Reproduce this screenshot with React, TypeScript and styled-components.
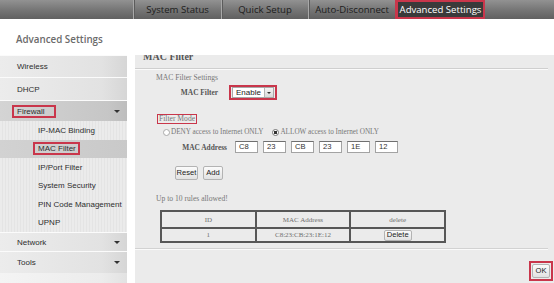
import React from "react";
import styled, { createGlobalStyle } from "styled-components";

const RED = "#c9364b";

const GlobalStyle = createGlobalStyle`
  html, body {
    margin: 0;
    padding: 0;
    background: #ffffff;
  }
  body {
    width: 554px;
    height: 283px;
    overflow: hidden;
  }
`;

const Page = styled.div`
  width: 554px;
  height: 283px;
  display: flex;
  flex-direction: column;
  overflow: hidden;
`;

/* ---------- top navigation ---------- */

const TopBar = styled.nav`
  flex: none;
  height: 19px;
  display: flex;
  padding-left: 133px;
  background: linear-gradient(#929292, #747474 55%, #606060);
`;

const Tab = styled.div<{ $active?: boolean; $w: number }>`
  width: ${(p) => p.$w}px;
  box-sizing: border-box;
  display: flex;
  align-items: center;
  justify-content: center;
  font-family: "Open Sans", "Liberation Sans", sans-serif;
  font-size: 9.6px;
  white-space: nowrap;
  color: ${(p) => (p.$active ? "#ffffff" : "#1c1c1c")};
  border-left: 1px solid ${(p) => (p.$active ? RED : "#a8a8a8")};
  background: ${(p) => (p.$active ? "#3a3a3a" : "transparent")};
  box-shadow: ${(p) => (p.$active ? `inset 0 0 0 2px ${RED}` : "inset 1px 0 0 #5c5c5c")};
`;

const PageTitle = styled.h1`
  margin: 0;
  flex: none;
  height: 36px;
  box-sizing: border-box;
  padding: 14px 0 0 16px;
  font-family: "Open Sans", "Liberation Sans", sans-serif;
  font-size: 9.8px;
  font-weight: 600;
  line-height: 14px;
  color: #6b6b6b;
`;

const Main = styled.div`
  flex: 1;
  display: flex;
  gap: 8px;
  min-height: 0;
`;

/* ---------- side menu ---------- */

const Sidebar = styled.aside`
  width: 127px;
  flex: none;
  display: flex;
  flex-direction: column;
  background: linear-gradient(90deg, #f4f4f4, #ececec 80%, #e2e2e2);
`;

type Kind = "main" | "open" | "sub" | "current";

const MenuRow = styled.div<{ $kind: Kind; $h: number }>`
  height: ${(p) => p.$h}px;
  flex: none;
  box-sizing: border-box;
  display: flex;
  align-items: center;
  padding-left: ${(p) => (p.$kind === "sub" || p.$kind === "current" ? 38 : 17)}px;
  padding-right: 7px;
  font-family: "Liberation Sans", Arial, sans-serif;
  font-size: 8px;
  color: #2e2e2e;
  white-space: nowrap;
  border-top: ${(p) => (p.$kind === "main" || p.$kind === "open" ? "1px solid #fbfbfb" : "none")};
  background: ${(p) =>
    p.$kind === "open"
      ? "linear-gradient(90deg, #d4d4d4, #c6c6c6 85%, #bdbdbd)"
      : p.$kind === "current"
      ? "linear-gradient(90deg, #d2d2d2, #c9c9c9)"
      : p.$kind === "sub"
      ? "repeating-linear-gradient(90deg, #ebebeb 0 2px, #e4e4e4 2px 3px)"
      : "linear-gradient(90deg, #ececec, #e2e2e2 80%, #d6d6d6)"};
`;

const Marked = styled.span<{ $padR: number }>`
  border: 2px solid ${RED};
  padding: 0 ${(p) => p.$padR}px 0 3px;
  margin-left: -5px;
  line-height: 9px;
`;

const Caret = styled.span`
  margin-left: auto;
  width: 0;
  height: 0;
  border-left: 3px solid transparent;
  border-right: 3px solid transparent;
  border-top: 3px solid #333;
`;

const SideFill = styled.div`
  flex: 1;
`;

/* ---------- content panel ---------- */

const Panel = styled.section`
  flex: 1;
  display: flex;
  flex-direction: column;
  background: #ebebeb;
  overflow: hidden;
  font-family: "Liberation Serif", "Times New Roman", serif;
  color: #6a6a6a;
`;

const PanelTitle = styled.h2`
  margin: 0 6px 0 0;
  height: 13px;
  flex: none;
  overflow: hidden;
  padding-left: 8px;
  border-bottom: 1px solid #cfcfcf;
  box-shadow: 0 1px 0 #fbfbfb;
`;

const PanelTitleText = styled.span`
  display: block;
  margin-top: -3px;
  font-size: 10px;
  line-height: 10px;
  font-weight: bold;
  color: #555;
`;

const PanelBody = styled.div`
  padding-left: 21px;
  display: flex;
  flex-direction: column;
  align-items: flex-start;
`;

const Note = styled.div<{ $top: number }>`
  margin-top: ${(p) => p.$top}px;
  font-size: 7.6px;
  line-height: 10px;
  color: #777;
`;

const FieldRow = styled.div<{ $top: number; $labelW: number }>`
  margin-top: ${(p) => p.$top}px;
  display: flex;
  align-items: center;
  & > label {
    width: ${(p) => p.$labelW}px;
    text-align: right;
    font-size: 7.4px;
    font-weight: bold;
    color: #555;
    white-space: nowrap;
  }
`;

const RedFrame = styled.span<{ $pad?: number }>`
  display: inline-flex;
  border: 2px solid ${RED};
  padding: ${(p) => p.$pad ?? 0}px;
`;

const Select = styled.span`
  display: inline-flex;
  align-items: center;
  height: 9px;
  background: #fff;
  border: 1px solid #a9a9a9;
  font-family: "Liberation Sans", Arial, sans-serif;
  font-size: 8px;
  color: #222;
  padding-left: 3px;
  margin: 0 1px;
  gap: 3px;
`;

const SelectButton = styled.span`
  width: 8px;
  height: 100%;
  display: flex;
  align-items: center;
  justify-content: center;
  border-left: 1px solid #b5b5b5;
  background: linear-gradient(#f4f4f4, #d9d9d9);
  &::after {
    content: "";
    border-left: 2px solid transparent;
    border-right: 2px solid transparent;
    border-top: 2px solid #333;
  }
`;

const ModeFrame = styled.div`
  margin-top: 14px;
  margin-left: 1px;
  border: 1px solid ${RED};
  padding: 0 1px;
  font-size: 7.6px;
  line-height: 8px;
  color: #777;
`;

const RadioRow = styled.div`
  margin-top: 3px;
  margin-left: 7px;
  display: flex;
  align-items: center;
  font-size: 7.2px;
  line-height: 10px;
  color: #777;
  white-space: nowrap;
`;

const Radio = styled.span<{ $checked?: boolean }>`
  width: 5px;
  height: 5px;
  border-radius: 50%;
  border: 1px solid ${(p) => (p.$checked ? "#777" : "#aaa")};
  background: ${(p) => (p.$checked ? "radial-gradient(circle, #333 0 1.6px, #fff 2px)" : "#fff")};
  margin-right: 1px;
  margin-left: ${(p) => (p.$checked ? 9 : 0)}px;
`;

const Octets = styled.div`
  display: flex;
  gap: 5px;
  margin-left: 8px;
`;

const Octet = styled.span`
  width: 23px;
  height: 12px;
  box-sizing: border-box;
  background: #fff;
  border: 1px solid #a3a3a3;
  border-top-color: #6f6f6f;
  padding-left: 3px;
  font-family: "Liberation Sans", Arial, sans-serif;
  font-size: 7.6px;
  line-height: 10px;
  color: #333;
`;

const ButtonRow = styled.div`
  margin-top: 13px;
  margin-left: 19px;
  display: flex;
  gap: 5px;
`;

const Button = styled.button<{ $w: number; $h?: number }>`
  width: ${(p) => p.$w}px;
  height: ${(p) => p.$h ?? 14}px;
  padding: 0;
  box-sizing: border-box;
  border: 1px solid #b3b3b3;
  border-radius: 2px;
  background: linear-gradient(#fbfbfb, #e2e2e2);
  font-family: "Liberation Sans", Arial, sans-serif;
  font-size: 7.6px;
  color: #222;
  line-height: 1;
`;

const RuleTable = styled.table`
  margin-top: 6px;
  margin-left: 4px;
  width: 286px;
  border-collapse: collapse;
  border: 2px solid #575757;
  table-layout: fixed;
  td,
  th {
    border: 2px solid #575757;
    padding: 0;
    text-align: center;
    font-size: 7px;
    line-height: 8px;
    font-weight: normal;
    color: #6f6f6f;
  }
  th {
    height: 15px;
  }
  td {
    height: 12px;
  }
`;

const Rule = styled.div`
  margin: 5px 6px 0 0;
  height: 0;
  border-top: 1px solid #d2d2d2;
  border-bottom: 1px solid #fafafa;
`;

const Footer = styled.div`
  margin-top: 11px;
  padding-right: 1px;
  display: flex;
  justify-content: flex-end;
`;

const tabs = [
  { label: "System Status", w: 88 },
  { label: "Quick Setup", w: 87 },
  { label: "Auto-Disconnect", w: 87 },
  { label: "Advanced Settings", w: 90, active: true },
];

const menu: { label: string; kind: Kind; h: number; caret?: boolean; mark?: number }[] = [
  { label: "Wireless", kind: "main", h: 22 },
  { label: "DHCP", kind: "main", h: 23 },
  { label: "Firewall", kind: "open", h: 21, caret: true, mark: 9 },
  { label: "IP-MAC Binding", kind: "sub", h: 18.5 },
  { label: "MAC Filter", kind: "current", h: 18.5, mark: 2 },
  { label: "IP/Port Filter", kind: "sub", h: 18.5 },
  { label: "System Security", kind: "sub", h: 18.5 },
  { label: "PIN Code Management", kind: "sub", h: 18.5 },
  { label: "UPNP", kind: "sub", h: 18.5 },
  { label: "Network", kind: "main", h: 19, caret: true },
  { label: "Tools", kind: "main", h: 22, caret: true },
];

const mac = ["C8", "23", "CB", "23", "1E", "12"];

export default function App() {
  return (
    <>
      <GlobalStyle />
      <Page>
        <TopBar>
          {tabs.map((t) => (
            <Tab key={t.label} $w={t.w} $active={t.active}>
              {t.label}
            </Tab>
          ))}
        </TopBar>

        <PageTitle>Advanced Settings</PageTitle>

        <Main>
          <Sidebar>
            {menu.map((m) => (
              <MenuRow key={m.label} $kind={m.kind} $h={m.h}>
                {m.mark !== undefined ? <Marked $padR={m.mark}>{m.label}</Marked> : m.label}
                {m.caret && <Caret />}
              </MenuRow>
            ))}
            <SideFill />
          </Sidebar>

          <Panel>
            <PanelTitle>
              <PanelTitleText>MAC Filter</PanelTitleText>
            </PanelTitle>

            <PanelBody>
              <Note $top={4}>MAC Filter Settings</Note>

              <FieldRow $top={2} $labelW={62}>
                <label>MAC Filter</label>
                <RedFrame style={{ marginLeft: 11 }}>
                  <Select>
                    Enable
                    <SelectButton />
                  </Select>
                </RedFrame>
              </FieldRow>

              <ModeFrame>Filter Mode</ModeFrame>

              <RadioRow>
                <Radio />
                DENY access to Internet ONLY
                <Radio $checked />
                ALLOW access to Internet ONLY
              </RadioRow>

              <FieldRow $top={4} $labelW={71}>
                <label>MAC Address</label>
                <Octets>
                  {mac.map((o, i) => (
                    <Octet key={i}>{o}</Octet>
                  ))}
                </Octets>
              </FieldRow>

              <ButtonRow>
                <Button $w={23}>Reset</Button>
                <Button $w={20}>Add</Button>
              </ButtonRow>

              <Note $top={14}>Up to 10 rules allowed!</Note>

              <RuleTable>
                <thead>
                  <tr>
                    <th>ID</th>
                    <th>MAC Address</th>
                    <th>delete</th>
                  </tr>
                </thead>
                <tbody>
                  <tr>
                    <td>1</td>
                    <td>C8:23:CB:23:1E:12</td>
                    <td>
                      <Button $w={28} $h={11} style={{ display: "block", margin: "0 auto" }}>
                        Delete
                      </Button>
                    </td>
                  </tr>
                </tbody>
              </RuleTable>
            </PanelBody>

            <Rule />

            <Footer>
              <RedFrame $pad={1}>
                <Button $w={18}>OK</Button>
              </RedFrame>
            </Footer>
          </Panel>
        </Main>
      </Page>
    </>
  );
}
